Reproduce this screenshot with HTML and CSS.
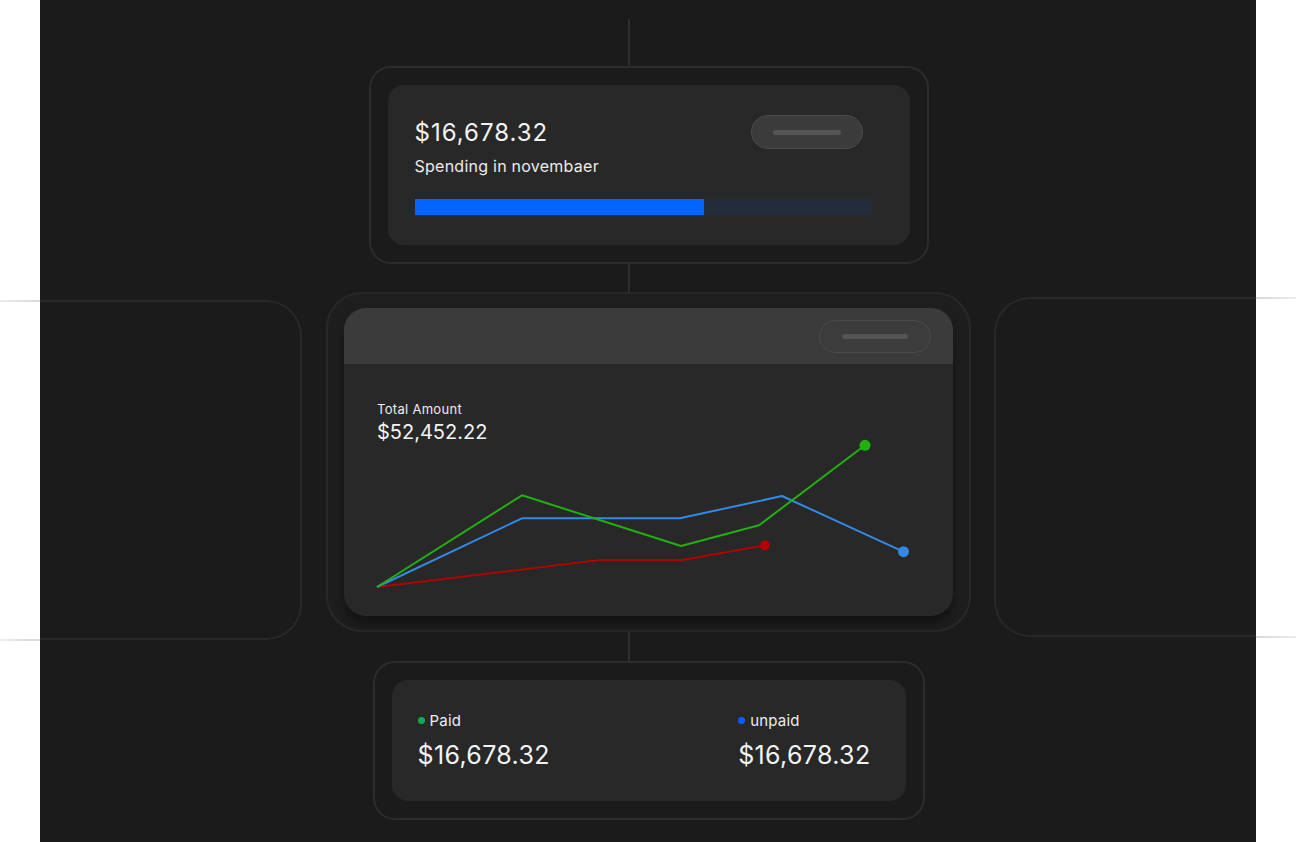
FILE: index.html
```html
<!DOCTYPE html>
<html lang="en">
<head>
<meta charset="utf-8">
<title>Spending overview</title>
<link rel="stylesheet" href="styles.css">
</head>
<body>
<div class="page">
  <div class="gutter gutter-left">
    <div class="gline gline-top"></div>
    <div class="gline gline-bottom"></div>
  </div>

  <div class="panel">
    <div class="side-card side-left"></div>

    <div class="center">
      <div class="connector c1"></div>

      <div class="frame frame-top">
        <div class="card spend">
          <div class="spend-head">
            <div class="amount-lg">$16,678.32</div>
            <div class="pill pill-top"><span class="pill-bar"></span></div>
          </div>
          <div class="spend-label">Spending in novembaer</div>
          <div class="progress"><div class="progress-fill" style="width:63.3%"></div></div>
        </div>
      </div>

      <div class="connector c2"></div>

      <div class="frame frame-mid">
        <div class="card chart-card">
          <div class="chart-head">
            <div class="pill pill-head"><span class="pill-bar"></span></div>
          </div>
          <div class="chart-body">
            <div class="chart-text">
              <div class="total-label">Total Amount</div>
              <div class="total-amount">$52,452.22</div>
            </div>
            <svg class="chart" width="608" height="155" viewBox="0 0 608 155">
              <polyline points="33,143 254,116.3 337,116.3 421,101.3" fill="none" stroke="#b00303" stroke-width="2" stroke-linejoin="round"/>
              <circle cx="421" cy="101.3" r="5" fill="#b00303"/>
              <polyline points="33,143 178,74.3 336,74.3 438,52 559.3,107.7" fill="none" stroke="#3389e6" stroke-width="2" stroke-linejoin="round"/>
              <circle cx="559.5" cy="107.7" r="5.5" fill="#3389e6"/>
              <polyline points="33,143 178,51.3 337,102 415,81.3 521,1.3" fill="none" stroke="#22b00f" stroke-width="2" stroke-linejoin="round"/>
              <circle cx="521" cy="1.3" r="5.5" fill="#22b00f"/>
            </svg>
          </div>
        </div>
      </div>

      <div class="connector c3"></div>

      <div class="frame frame-bottom">
        <div class="card status">
          <div class="stat">
            <div class="stat-label"><span class="dot dot-green"></span>Paid</div>
            <div class="stat-amount">$16,678.32</div>
          </div>
          <div class="stat">
            <div class="stat-label"><span class="dot dot-blue"></span>unpaid</div>
            <div class="stat-amount">$16,678.32</div>
          </div>
        </div>
      </div>
    </div>

    <div class="side-card side-right"></div>
  </div>

  <div class="gutter gutter-right">
    <div class="gline gline-top"></div>
    <div class="gline gline-bottom"></div>
  </div>
</div>
</body>
</html>
```

FILE: styles.css
```css
* { box-sizing: border-box; }

html, body {
  margin: 0;
  padding: 0;
  background: #ffffff;
}

body {
  font-family: Inter, "Liberation Sans", sans-serif;
  color: #f3f3f3;
}

.page {
  display: flex;
  width: 1296px;
  height: 842px;
  overflow: hidden;
}

/* white gutters with faint continuation lines */
.gutter {
  width: 40px;
  flex: none;
  display: flex;
  flex-direction: column;
}
.gline {
  height: 2px;
}
.gutter-left .gline {
  background: linear-gradient(to right, #ececec, #d9d9d9);
}
.gutter-right .gline {
  background: linear-gradient(to right, #d9d9d9, #ececec);
}
.gutter-left .gline-top { margin-top: 300px; }
.gutter-left .gline-bottom { margin-top: 337px; }
.gutter-right .gline-top { margin-top: 297px; }
.gutter-right .gline-bottom { margin-top: 337px; }

/* dark panel */
.panel {
  width: 1216px;
  height: 842px;
  flex: none;
  background: #1b1b1b;
  display: flex;
  align-items: flex-start;
}

.side-card {
  width: 262px;
  height: 340px;
  flex: none;
  border: 2px solid #282828;
}
.side-left {
  margin-top: 300px;
  margin-right: 24px;
  border-left: none;
  border-radius: 0 36px 36px 0;
}
.side-right {
  margin-top: 297px;
  margin-left: 23px;
  border-right: none;
  border-radius: 36px 0 0 36px;
}

.center {
  width: 645px;
  flex: none;
  display: flex;
  flex-direction: column;
  align-items: center;
}

.connector {
  width: 2px;
  background: #2e2e2e;
  align-self: flex-start;
  margin-left: 302px;
}
.c1 { margin-top: 19px; height: 47px; }
.c2 { height: 28px; }
.c3 { height: 29px; }

.frame {
  border: 2px solid #2c2c2c;
}
.frame-top {
  width: 560px;
  height: 198px;
  border-radius: 22px;
  padding: 17px;
}
.frame-mid {
  width: 645px;
  height: 340px;
  border-radius: 36px;
  padding: 14px 16px;
  border-color: #282828;
  background: #1e1e1e;
}
.frame-bottom {
  width: 552px;
  height: 159px;
  border-radius: 22px;
  padding: 17px;
}

.card {
  background: #282828;
  height: 100%;
}

/* top card */
.spend {
  border-radius: 16px;
  padding: 33px 38px 30px 27px;
  display: flex;
  flex-direction: column;
}
.spend-head {
  display: flex;
  justify-content: space-between;
  align-items: flex-start;
}
.amount-lg {
  font-size: 24px;
  line-height: 29px;
  letter-spacing: 1px;
}
.spend-label {
  margin-top: 8px;
  font-size: 16px;
  line-height: 19px;
  letter-spacing: 0.25px;
  color: #ececec;
}
.progress {
  margin-top: 23px;
  height: 18px;
  background: #222c3b;
  display: flex;
}
.progress-fill {
  height: 100%;
  background: #0066ff;
}

.pill {
  width: 112px;
  height: 34px;
  border-radius: 17px;
  border: 1.5px solid #4b4b4b;
  background: #3b3b3b;
  display: flex;
  align-items: center;
  justify-content: center;
}
.pill-top {
  margin-top: -3px;
  margin-right: 9px;
}
.pill-head {
  height: 33px;
  background: #3c3c3c;
}
.pill-bar {
  width: 68px;
  height: 5px;
  border-radius: 3px;
  background: #555555;
}
.pill-head .pill-bar {
  width: 66px;
  background: #545454;
}

/* chart card */
.chart-card {
  border-radius: 22px;
  overflow: hidden;
  display: flex;
  flex-direction: column;
  box-shadow: 0 9px 10px rgba(0, 0, 0, 0.35);
}
.chart-head {
  height: 56px;
  background: #3b3b3b;
  display: flex;
  justify-content: flex-end;
  align-items: flex-start;
  padding: 12px 22px 0 0;
}
.chart-body {
  flex: 1;
  display: flex;
  flex-direction: column;
}
.chart-text {
  padding: 37px 0 0 33px;
}
.total-label {
  font-size: 13px;
  line-height: 16px;
  letter-spacing: 0.3px;
  color: #ededed;
}
.total-amount {
  margin-top: 3px;
  font-size: 20px;
  line-height: 24px;
  letter-spacing: 0;
}
.chart {
  display: block;
  overflow: visible;
}

/* bottom card */
.status {
  border-radius: 16px;
  display: flex;
  justify-content: space-between;
  align-items: center;
  padding: 0 35px 0 26px;
}
.stat {
  display: flex;
  flex-direction: column;
}
.stat-label {
  display: flex;
  align-items: center;
  font-size: 15px;
  line-height: 18px;
  letter-spacing: 0.2px;
  color: #ededed;
}
.dot {
  width: 7px;
  height: 7px;
  border-radius: 50%;
  margin-right: 5px;
}
.dot-green { background: #0fa957; }
.dot-blue { background: #0a5cff; }
.stat-amount {
  margin-top: 10px;
  font-size: 25px;
  line-height: 30px;
  letter-spacing: 0.35px;
}
```
